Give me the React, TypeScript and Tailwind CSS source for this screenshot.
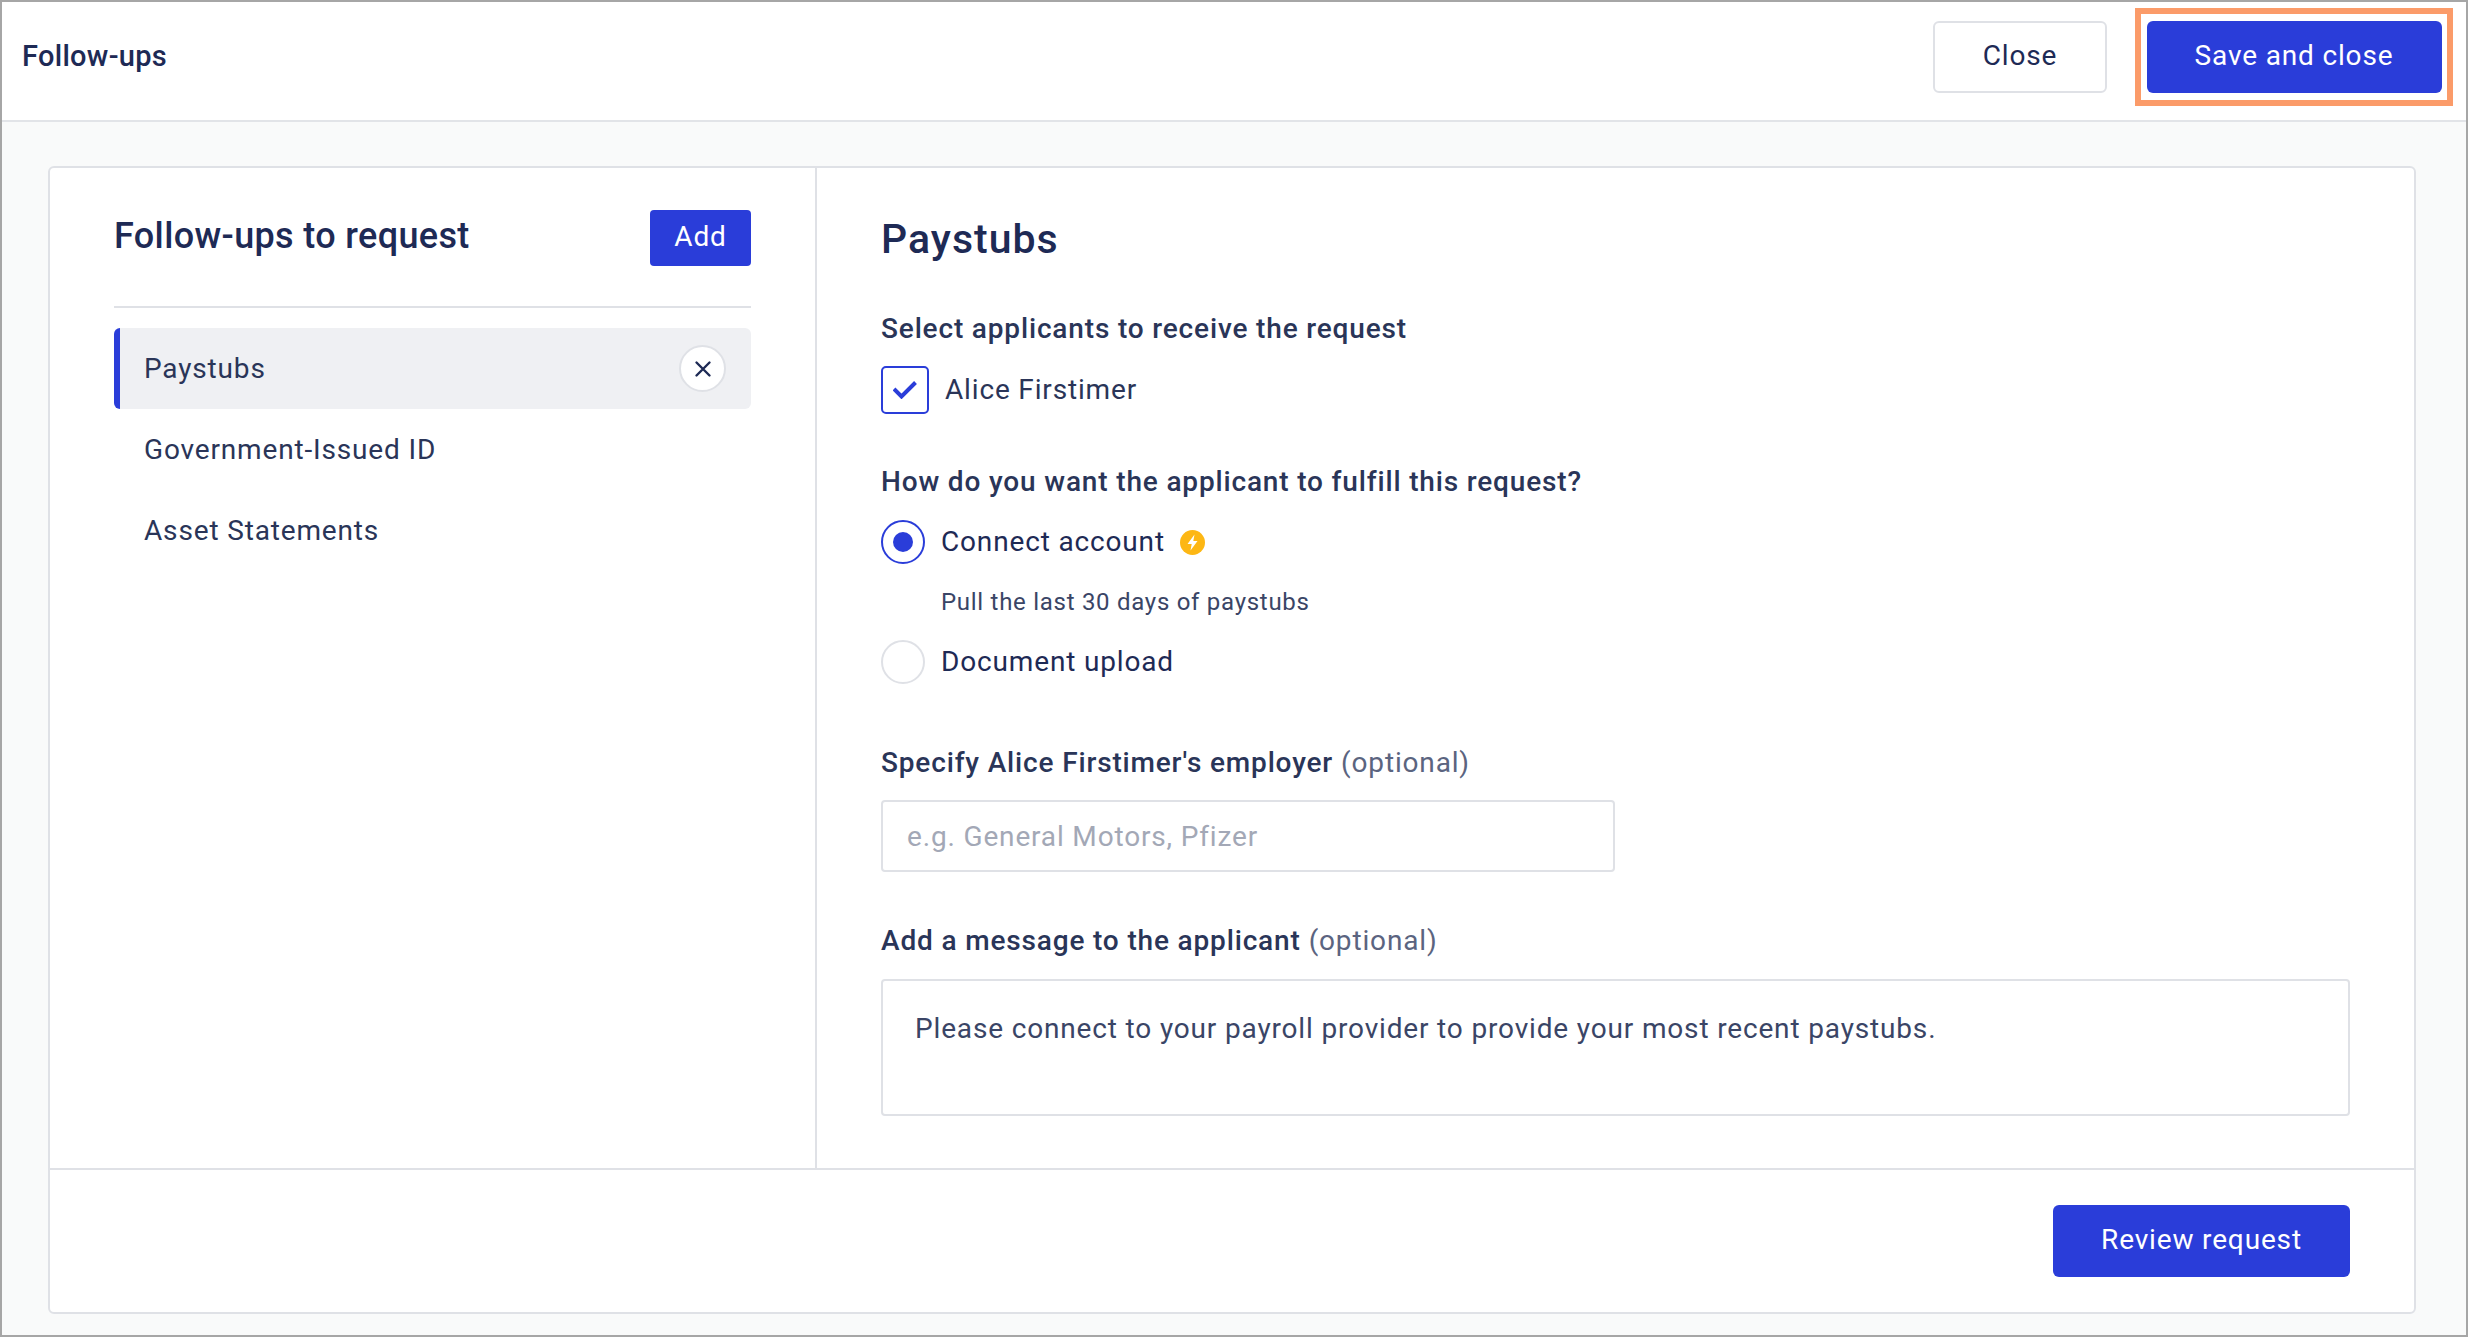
import React from "react";

const font = { fontFamily: "Roboto, 'Liberation Sans', sans-serif" };

function Btn({ className, children }: { className: string; children: React.ReactNode }) {
  return (
    <button className={`flex items-center justify-center rounded-[6px] text-[28px] tracking-[0.03em] leading-none pb-[2px] ${className}`}>
      {children}
    </button>
  );
}

function Section({ className, children }: { className?: string; children: React.ReactNode }) {
  return <div className={`flex items-center text-[28px] font-medium tracking-[0.03em] text-[#2a3558] h-[40px] ${className ?? ""}`}>{children}</div>;
}

export default function App() {
  return (
    <div className="box-border w-[2468px] h-[1337px] border-2 border-[#a6a6a6] bg-[#f9fafa] flex flex-col text-[#1e2a55]" style={font}>
      <header className="box-border h-[120px] shrink-0 bg-white border-b-2 border-[#e2e4e8] flex items-center pl-[20px] pr-[13px]">
        <div className="text-[29px] font-medium flex-1 tracking-[0.01em] mb-[8px]">Follow-ups</div>
        <Btn className="box-border w-[174px] h-[72px] mb-[8px] bg-white border-2 border-[#dfe1e6] text-[#1e2a55] mr-[28px]">Close</Btn>
        <div className="box-border w-[318px] h-[98px] mb-[8px] border-[6px] border-[#fb9b69] flex items-center justify-center">
          <Btn className="w-[295px] h-[72px] bg-[#2a3dd9] text-white">Save and close</Btn>
        </div>
      </header>

      <main className="flex-1 min-h-0 pl-[46px] pr-[50px] pt-[44px] pb-[21px] flex">
        <div className="box-border flex-1 bg-white border-2 border-[#dfe1e6] rounded-[6px] flex flex-col">
          <div className="flex-1 min-h-0 flex">
            <aside className="box-border w-[767px] shrink-0 border-r-2 border-[#dfe1e6] pl-[64px] pr-[64px] pt-[42px]">
              <div className="box-border h-[98px] border-b-2 border-[#dfe1e6] flex items-start justify-between">
                <div className="text-[36px] font-medium leading-[53px] tracking-[0.01em]">Follow-ups to request</div>
                <Btn className="w-[101px] h-[56px] bg-[#2a3dd9] text-white !rounded-[4px]">Add</Btn>
              </div>
              <ul className="mt-[20px] text-[28px] tracking-[0.03em] text-[#2a3558]">
                <li className="box-border h-[81px] flex items-center justify-between rounded-[6px] bg-[#eff0f3] border-l-[6px] border-[#2a3dd9] pl-[24px] pr-[25px]">
                  <span>Paystubs</span>
                  <span className="box-border w-[47px] h-[47px] rounded-full bg-white border-2 border-[#dfe1e6] flex items-center justify-center">
                    <svg width="18" height="18" viewBox="0 0 18 18" fill="none" stroke="#1e2a55" strokeWidth="2.4" strokeLinecap="round">
                      <path d="M2.5 2.5l13 13M15.500 2.500l-13 13" />
                    </svg>
                  </span>
                </li>
                <li className="h-[81px] flex items-center pl-[30px]">Government-Issued ID</li>
                <li className="h-[81px] flex items-center pl-[30px]">Asset Statements</li>
              </ul>
            </aside>

            <section className="flex-1 min-w-0 pl-[64px] pr-[64px] pt-[48px]">
              <h1 className="text-[41px] font-medium leading-[46px] h-[46px] tracking-[0.025em]">Paystubs</h1>
              <Section className="mt-[47px]">Select applicants to receive the request</Section>
              <label className="mt-[17px] flex items-center h-[48px]">
                <span className="box-border w-[48px] h-[48px] rounded-[5px] border-2 border-[#2a3dd9] bg-white flex items-center justify-center">
                  <svg width="24" height="18" viewBox="0 0 24 18" fill="none" stroke="#2a3dd9" strokeWidth="4">
                    <path d="M1 8l7.500 7.500L22.500 1.500" />
                  </svg>
                </span>
                <span className="ml-[16px] text-[28px] tracking-[0.03em] text-[#2a3558]">Alice Firstimer</span>
              </label>

              <Section className="mt-[48px]">How do you want the applicant to fulfill this request?</Section>
              <div className="mt-[18px] flex items-center h-[44px]">
                <span className="box-border w-[44px] h-[44px] rounded-full border-2 border-[#2a3dd9] bg-white flex items-center justify-center">
                  <span className="w-[20px] h-[20px] rounded-full bg-[#2a3dd9]" />
                </span>
                <span className="ml-[16px] text-[28px] tracking-[0.03em]">Connect account</span>
                <svg className="ml-[15px]" width="25" height="25" viewBox="0 0 25 25">
                  <circle cx="12.500" cy="12.500" r="12.500" fill="#fdb714" />
                  <path d="M14.500 4.500L7.500 14h4.200l-1.200 6.500 7-9.500h-4.200z" fill="#fff" />
                </svg>
              </div>
              <div className="mt-[18px] ml-[60px] h-[40px] flex items-center text-[24px] tracking-[0.03em] text-[#3a4566]">Pull the last 30 days of paystubs</div>
              <div className="mt-[18px] flex items-center h-[44px]">
                <span className="box-border w-[44px] h-[44px] rounded-full border-2 border-[#dfe1e6] bg-white" />
                <span className="ml-[16px] text-[28px] tracking-[0.03em]">Document upload</span>
              </div>

              <Section className="mt-[59px]">
                Specify Alice Firstimer's employer<span className="ml-[8px] font-normal text-[#5b6480]">(optional)</span>
              </Section>
              <input
                readOnly
                placeholder="e.g. General Motors, Pfizer"
                className="box-border block mt-[17px] w-[734px] h-[72px] rounded-[4px] border-2 border-[#dfe1e6] bg-white px-[24px] text-[28px] tracking-[0.03em] outline-none placeholder:text-[#a3a8b6]"
              />
              <Section className="mt-[49px]">
                Add a message to the applicant<span className="ml-[8px] font-normal text-[#5b6480]">(optional)</span>
              </Section>
              <textarea
                readOnly
                defaultValue="Please connect to your payroll provider to provide your most recent paystubs."
                className="box-border block mt-[18px] w-full h-[137px] rounded-[4px] border-2 border-[#dfe1e6] bg-white px-[32px] pt-[30px] text-[28px] leading-[36px] tracking-[0.03em] text-[#3a4566] outline-none resize-none"
              />
            </section>
          </div>

          <footer className="box-border h-[144px] shrink-0 border-t-2 border-[#dfe1e6] flex items-center justify-end pr-[64px]">
            <Btn className="w-[297px] h-[72px] bg-[#2a3dd9] text-white">Review request</Btn>
          </footer>
        </div>
      </main>
    </div>
  );
}
